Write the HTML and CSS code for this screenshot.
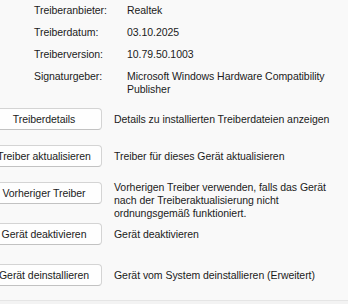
FILE: index.html
```html
<!DOCTYPE html>
<html lang="de">
<head>
<meta charset="utf-8">
<link rel="stylesheet" href="styles.css">
</head>
<body>
<div class="page">
  <dl class="props">
    <dt>Treiberanbieter:</dt><dd>Realtek</dd>
    <dt>Treiberdatum:</dt><dd>03.10.2025</dd>
    <dt>Treiberversion:</dt><dd>10.79.50.1003</dd>
    <dt>Signaturgeber:</dt><dd>Microsoft Windows Hardware Compatibility Publisher</dd>
  </dl>
  <div class="actions">
    <div class="action action-1">
      <button class="btn">Treiberdetails</button>
      <p class="desc">Details zu installierten Treiberdateien anzeigen</p>
    </div>
    <div class="action action-2">
      <button class="btn">Treiber aktualisieren</button>
      <p class="desc">Treiber für dieses Gerät aktualisieren</p>
    </div>
    <div class="action action-3 multi">
      <button class="btn">Vorheriger Treiber</button>
      <p class="desc">Vorherigen Treiber verwenden, falls das Gerät nach der Treiberaktualisierung nicht ordnungsgemäß funktioniert.</p>
    </div>
    <div class="action action-4">
      <button class="btn">Gerät deaktivieren</button>
      <p class="desc">Gerät deaktivieren</p>
    </div>
    <div class="action action-5">
      <button class="btn">Gerät deinstallieren</button>
      <p class="desc">Gerät vom System deinstallieren (Erweitert)</p>
    </div>
  </div>
  <div class="footer"></div>
</div>
</body>
</html>
```
FILE: styles.css
```css
html, body {
  margin: 0;
  padding: 0;
  background: #f9f9f9;
}
body {
  width: 348px;
  height: 304px;
  overflow: hidden;
  font-family: "Liberation Sans", Arial, sans-serif;
  font-size: 10.5px;
  letter-spacing: -0.05px;
  color: #1b1b1b;
}
.page {
  display: flex;
  flex-direction: column;
}
.props {
  display: grid;
  grid-template-columns: 93px 204px;
  row-gap: 9px;
  margin: 4px 0 0 34px;
  line-height: 13px;
}
.props dt, .props dd {
  margin: 0;
}
.actions {
  display: flex;
  flex-direction: column;
  margin-top: 8px;
}
.action {
  display: flex;
  align-items: center;
  gap: 12px;
}
.action-1 { margin-top: 4px; }
.action-2 { margin-top: 15px; }
.action-3 { margin-top: 15px; }
.action-4 { margin-top: 3px; }
.action-5 { margin-top: 19px; }
.action.multi {
  align-items: flex-start;
}
.btn {
  flex: none;
  width: 116px;
  height: 22px;
  margin-left: -14px;
  padding: 0;
  background: #fefefe;
  border: 1px solid #d4d4d4;
  border-bottom-color: #c2c2c2;
  border-radius: 4px;
  font: inherit;
  letter-spacing: inherit;
  color: #1b1b1b;
  text-align: center;
  line-height: 20px;
  white-space: nowrap;
}
.desc {
  margin: 0;
  width: 222px;
  line-height: 13px;
}
.multi .desc {
  margin-top: -1px;
}
.footer {
  margin-top: 14px;
  height: 4px;
  border-top: 1px solid #e5e5e5;
  background: #f3f3f3;
}
```
